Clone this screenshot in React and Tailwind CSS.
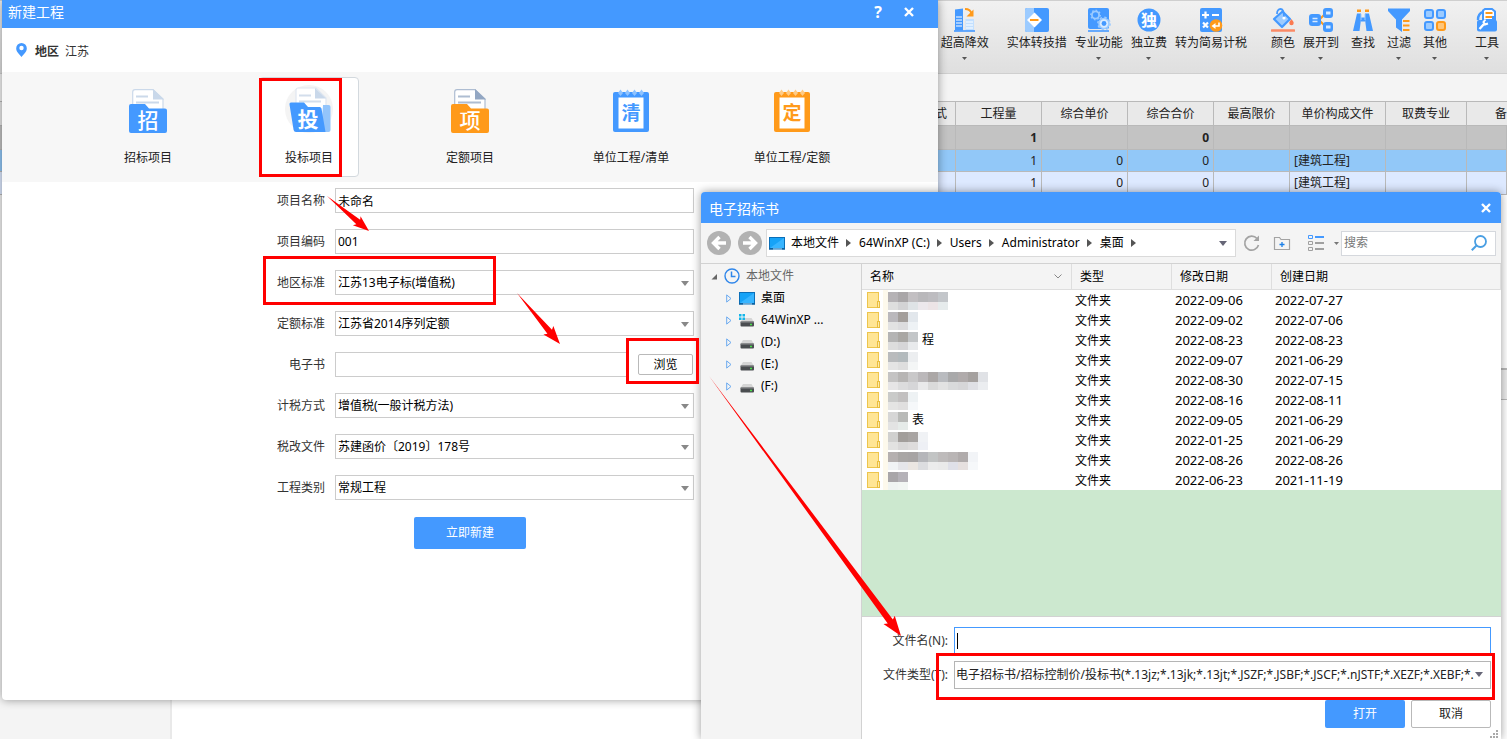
const BLUE = '#4499ff';
const LIGHT_BLUE = '#9ccbff';
const ORANGE = '#ff9a1a';

/* ---------- ribbon icons ---------- */

function RibbonIcon({ children }) {
  return (
    <svg width="24" height="24" viewBox="0 0 24 24" fill="none" aria-hidden="true">
      {children}
    </svg>
  );
}

const HighRiseIcon = () => (
  <RibbonIcon>
    <path d="M2 1.500L10 .5v22H2z" fill={BLUE} />
    <path d="M3 9h6M3 12h6M3 15h6M3 18h6" stroke="#fff" strokeWidth="1.2" />
    <path d="M12.500 11h8.500v12h-8.500z" fill="#c3e0ff" />
    <path d="M13 14h7M13 17h7M13 20h7" stroke="#fff" strokeWidth="1.2" />
    <path d="M12 1c4 0 6 2 6.500 5" stroke={ORANGE} strokeWidth="2" />
    <path d="M13.500 8.500h7V1.500z" fill={ORANGE} />
    <path d="M1 23h21" stroke={BLUE} strokeWidth="1.6" />
  </RibbonIcon>
);

const ConvertIcon = () => (
  <RibbonIcon>
    <rect width="24" height="24" rx="2" fill={BLUE} />
    <path d="M2 0h7v24H2a2 2 0 0 1-2-2V2a2 2 0 0 1 2-2z" fill={LIGHT_BLUE} />
    <path d="M9.500 4.500L17 12l-7.500 7.500L2 12z" fill="#fff" />
    <path d="M5 12h8.500" stroke={ORANGE} strokeWidth="2" />
  </RibbonIcon>
);

const GearsIcon = () => (
  <RibbonIcon>
    <rect x="1" width="21" height="21" rx="2" fill={BLUE} />
    <circle cx="8.500" cy="7" r="3.600" stroke={LIGHT_BLUE} strokeWidth="1.800" />
    <circle cx="8.500" cy="7" r="4.800" stroke={LIGHT_BLUE} strokeWidth="1.200" strokeDasharray="1.600 2.100" />
    <circle cx="17" cy="15.500" r="5" fill="#d9ebff" stroke={LIGHT_BLUE} strokeWidth="1.600" />
    <circle cx="17" cy="15.500" r="6.200" stroke={LIGHT_BLUE} strokeWidth="1.400" strokeDasharray="2.400 2.400" />
    <circle cx="17" cy="15.500" r="2.400" fill={BLUE} />
    <path d="M1 23h21" stroke={BLUE} strokeWidth="1.6" />
  </RibbonIcon>
);

const SoloFeeIcon = () => (
  <RibbonIcon>
    <circle cx="12" cy="12" r="11.500" fill={BLUE} />
    <text x="12" y="18" textAnchor="middle" fontSize="16" fontWeight="700" fill="#fff">独</text>
  </RibbonIcon>
);

const SimpleTaxIcon = () => (
  <RibbonIcon>
    <rect x="1" width="22" height="24" rx="2" fill={BLUE} />
    <path d="M3 7h7M6.500 3.500v7M13 7h7M4 14.500l5 5M9 14.500l-5 5" stroke="#fff" strokeWidth="2.200" />
    <circle cx="17" cy="17.500" r="6.300" fill={ORANGE} />
    <path d="M20 14.500v3.500h-4" stroke="#fff" strokeWidth="1.600" />
    <path d="M12.500 18l4-3v6z" fill="#fff" />
  </RibbonIcon>
);

const PaintIcon = () => (
  <RibbonIcon>
    <path d="M11.500 3.500l7.500 7.500-8 8-8-8z" fill={LIGHT_BLUE} stroke={BLUE} strokeWidth="2.200" strokeLinejoin="round" />
    <path d="M6 6c0-3.500 1.500-5 3.500-5S13 3 13 9" stroke={BLUE} strokeWidth="1.800" />
    <circle cx="13" cy="10" r="1.600" fill="#fff" />
    <path d="M20.500 11c1.200 1.800 2.200 2.800 2.200 4a2.200 2.200 0 0 1-4.400 0c0-1.200 1-2.200 2.200-4z" fill="#fb7a50" />
    <path d="M1 22.500h22" stroke="#fb8a66" strokeWidth="2.600" strokeLinecap="round" />
  </RibbonIcon>
);

const ExpandIcon = () => (
  <RibbonIcon>
    <path d="M10 12l7-7M10 12l7 7" stroke={ORANGE} strokeWidth="2" />
    <rect y="6" width="12" height="12" rx="3" fill={BLUE} />
    <path d="M3.500 10.500h5M3.500 13.500h5" stroke="#d7eaff" strokeWidth="1.600" />
    <rect x="14" width="10" height="10" rx="3" fill={BLUE} />
    <rect x="14" y="14" width="10" height="10" rx="3" fill={BLUE} />
    <path d="M17 5h4.500M17 19h4.500" stroke="#d7eaff" strokeWidth="2.800" />
  </RibbonIcon>
);

const BinocularsIcon = () => (
  <RibbonIcon>
    <path d="M6 1.500h4v2.500H6zM14 1.500h4v2.500h-4z" fill={ORANGE} />
    <path d="M6 5.500h4v6l-1.500 11.500H2zM18 5.500h-4v6l1.500 11.500H22z" fill={BLUE} />
    <path d="M10 9.500h4v4h-4z" fill={BLUE} />
    <path d="M10 6v6M14 6v6" stroke={LIGHT_BLUE} />
  </RibbonIcon>
);

const FilterIcon = () => (
  <RibbonIcon>
    <path d="M1 .5h22v2.500l-8 8.500V24l-6-4.500v-8L1 3z" fill={BLUE} />
    <path d="M16 13h6.500M16 17.500h6.500M16 22h6.500" stroke={ORANGE} strokeWidth="2.200" />
  </RibbonIcon>
);

const GridIcon = () => (
  <RibbonIcon>
    <rect x="2" y="2" width="8" height="8" rx="2" fill={LIGHT_BLUE} stroke={BLUE} strokeWidth="2" />
    <rect x="14" y="2" width="8" height="8" rx="2" fill={LIGHT_BLUE} stroke={BLUE} strokeWidth="2" />
    <rect x="2" y="14" width="8" height="8" rx="2" fill={LIGHT_BLUE} stroke={BLUE} strokeWidth="2" />
    <rect x="14" y="14" width="8" height="8" rx="2" fill="#ffc67a" stroke={ORANGE} strokeWidth="2" />
  </RibbonIcon>
);

const ToolsIcon = () => (
  <RibbonIcon>
    <path d="M8 12V2.500L10 1h7l3 2.500V12z" fill="#fff" stroke={BLUE} strokeWidth="2" />
    <path d="M10.500 5h7M10.500 9h7" stroke={ORANGE} strokeWidth="1.800" />
    <path d="M8 4C4.500 5 3 7.500 3 12" stroke={BLUE} strokeWidth="2.400" />
    <rect x="2" y="12" width="20" height="11.500" rx="2" fill={BLUE} />
    <path d="M17 8h4v6h-4z" fill={BLUE} />
    <path d="M4.500 21l4.500-5" stroke="#fff" strokeWidth="2.400" />
    <path d="M10.500 11.500l-2 2.500 1.500 2.500 3-1" stroke="#fff" strokeWidth="2" />
  </RibbonIcon>
);

const RIBBON_GROUPS = [
  {
    className: 'flex',
    items: [{ label: '超高降效', icon: HighRiseIcon, menu: true }],
  },
  {
    className: 'flex gap-2 ml-[18px]',
    items: [
      { label: '实体转技措', icon: ConvertIcon },
      { label: '专业功能', icon: GearsIcon, menu: true },
      { label: '独立费', icon: SoloFeeIcon, menu: true },
      { label: '转为简易计税', icon: SimpleTaxIcon },
    ],
  },
  {
    className: 'flex gap-2 ml-6',
    items: [
      { label: '颜色', icon: PaintIcon, menu: true },
      { label: '展开到', icon: ExpandIcon, menu: true },
    ],
  },
  {
    className: 'flex gap-3 ml-3',
    items: [
      { label: '查找', icon: BinocularsIcon },
      { label: '过滤', icon: FilterIcon, menu: true },
      { label: '其他', icon: GridIcon, menu: true },
    ],
  },
  {
    className: 'flex ml-7',
    items: [{ label: '工具', icon: ToolsIcon, menu: true }],
  },
];

function Triangle({ className = '' }) {
  return (
    <svg width="8" height="5" viewBox="0 0 8 5" className={className} aria-hidden="true">
      <path d="M0 0h8L4 5z" fill="currentColor" />
    </svg>
  );
}

function Ribbon() {
  return (
    <div className="flex h-[74px] shrink-0 justify-end border-y border-[#cfcfcf] bg-linear-to-b from-[#f1f1f1] to-[#dfdfdf] pr-2 pt-[7px]">
      {RIBBON_GROUPS.map((group) => (
        <div key={group.items[0].label} className={group.className}>
          {group.items.map(({ label, icon: Icon, menu }) => (
            <button key={label} type="button" className="flex flex-col items-center whitespace-nowrap text-[#222]">
              <Icon />
              <span className="mt-[3px] leading-4">{label}</span>
              {menu && (
                <svg width="5" height="3" viewBox="0 0 5 3" className="mt-1.5 text-[#555]" aria-hidden="true">
                  <path d="M0 0h5L2.500 3z" fill="currentColor" />
                </svg>
              )}
            </button>
          ))}
        </div>
      ))}
    </div>
  );
}

/* ---------- background sheet ---------- */

const SHEET_ROWS = [
  { className: 'h-6 bg-[#c3c3c3] font-bold', cells: ['', '1', '', '0', '', '', '', ''] },
  { className: 'h-[22px] bg-[#92c8f8]', cells: ['', '1', '0', '0', '', '[建筑工程]', '', ''] },
  { className: 'h-[23px] bg-[#dde9ff]', cells: ['', '1', '0', '0', '', '[建筑工程]', '', ''] },
];

function Sheet() {
  return (
    <table className="w-full shrink-0 table-fixed border-separate border-spacing-0 border-t border-[#b9b9b9] text-[#222]">
      <colgroup>
        <col />
        <col className="w-[86px]" />
        <col className="w-[86px]" />
        <col className="w-[86px]" />
        <col className="w-[76px]" />
        <col className="w-[96px]" />
        <col className="w-[81px]" />
        <col className="w-10" />
      </colgroup>
      <thead>
        <tr className="h-6 bg-[#e9e9e9]">
          {['式', '工程量', '综合单价', '综合合价', '最高限价', '单价构成文件', '取费专业', '备'].map((name, i) => (
            <th
              key={name}
              className={
                i === 0
                  ? 'border-b border-r border-[#b9b9b9] p-0 pr-2 text-right font-normal'
                  : i === 7
                    ? 'border-b border-[#b9b9b9] p-0 text-right font-normal'
                    : 'border-b border-r border-[#b9b9b9] p-0 text-center font-normal'
              }
            >
              {name}
            </th>
          ))}
        </tr>
      </thead>
      <tbody>
        {SHEET_ROWS.map((row, r) => (
          <tr key={r} className={row.className}>
            {row.cells.map((cell, i) => (
              <td
                key={i}
                className={
                  i === 5
                    ? 'border-b border-r border-[#b9b9b9] p-0 pl-1 leading-4'
                    : 'border-b border-r border-[#b9b9b9] p-0 pr-1 text-right leading-4'
                }
              >
                {cell}
              </td>
            ))}
          </tr>
        ))}
      </tbody>
    </table>
  );
}

function Workspace() {
  return (
    <div className="flex h-full flex-col bg-white">
      <Ribbon />
      <div className="h-[27px] shrink-0 bg-[#f4f4f4]" />
      <Sheet />
      <div className="flex flex-1">
        <div className="w-[172px] border-r-2 border-[#e9e9e9] bg-[#f4f4f4]" />
        <div className="flex flex-1 flex-col">
          <div className="h-[173px]" />
          <div className="h-8 border-b border-t-2 border-[#b9b9b9] bg-[#ececec]" />
        </div>
      </div>
    </div>
  );
}

/* ---------- new project window ---------- */

function FolderIcon({ char, color, line, fold }) {
  return (
    <svg width="40" height="44" viewBox="0 0 40 44" aria-hidden="true">
      <path d="M7 .7h18l10 9.300v14H4.700V3A2.300 2.300 0 0 1 7 .7z" fill="#fff" stroke={line} strokeWidth="1.200" />
      <path d="M25 0l11 10.500H25z" fill={fold} />
      <path d="M8 7.500h12M8 13.500h23" stroke={line} strokeWidth="2" />
      <path d="M3 15h14l4 4.500h16a2 2 0 0 1 2 2V42a2 2 0 0 1-2 2H3a2 2 0 0 1-2-2V17a2 2 0 0 1 2-2z" fill={color} />
      <text x="20" y="39" textAnchor="middle" fontSize="21" fontWeight="500" fill="#fff">{char}</text>
    </svg>
  );
}

function OpenFolderIcon({ char }) {
  return (
    <svg width="44" height="44" viewBox="0 0 44 44" className="overflow-visible" aria-hidden="true">
      <circle cx="22" cy="20" r="24" fill="#f4f4f4" />
      <path d="M11 -1h18l10 10v20H9V1a2 2 0 0 1 2-2z" fill="#fff" stroke="#dfe6f0" strokeWidth="1.200" />
      <path d="M28 -1l11 10.500H28z" fill="#c9d8ea" />
      <path d="M12 6.500h12M12 12.500h22" stroke="#d3deec" strokeWidth="2" />
      <path d="M36 16h5.500a2 2 0 0 1 2 2v23a2 2 0 0 1-2 2H34z" fill="#92c4fb" />
      <path d="M4 13.500h13l4 4.500h11.500a2 2 0 0 1 2 1.600L38.500 43H9a2.500 2.500 0 0 1-2.400-2L2.500 15.500A1.700 1.700 0 0 1 4 13.500z" fill={BLUE} />
      <text x="21" y="38" textAnchor="middle" fontSize="21" fontWeight="700" fill="#fff">{char}</text>
    </svg>
  );
}

function NotebookIcon({ char, color, light }) {
  return (
    <svg width="36" height="44" viewBox="0 0 36 44" aria-hidden="true">
      <rect y="3" width="36" height="40" rx="2" fill={color} />
      <path d="M5.500 8.500h25v31h-25z" fill="#fff" />
      {[7.5, 14.5, 21.5, 28.5].map((x) => (
        <path key={x} d={`M${x - 2.5} 4l2.500-3.500 2.500 3.500-2.500 3z`} fill={light} />
      ))}
      <text x="18" y="31" textAnchor="middle" fontSize="19" fontWeight="700" fill={color}>{char}</text>
    </svg>
  );
}

const PROJECT_TYPES = [
  { label: '招标项目', icon: <FolderIcon char="招" color={BLUE} line="#cbd9ea" fold="#c9d8ea" /> },
  { label: '投标项目', icon: <OpenFolderIcon char="投" />, active: true },
  { label: '定额项目', icon: <FolderIcon char="项" color={ORANGE} line="#aebdd2" fold="#93a7c3" /> },
  { label: '单位工程/清单', icon: <NotebookIcon char="清" color={BLUE} light="#8fc3ff" /> },
  { label: '单位工程/定额', icon: <NotebookIcon char="定" color={ORANGE} light="#ffcb85" /> },
];

const FIELDS = [
  { id: 'name', label: '项目名称', type: 'text', value: '未命名' },
  { id: 'code', label: '项目编码', type: 'text', value: '001' },
  { id: 'region', label: '地区标准', type: 'select', value: '江苏13电子标(增值税)' },
  { id: 'quota', label: '定额标准', type: 'select', value: '江苏省2014序列定额' },
  { id: 'ebook', label: '电子书', type: 'file', value: '' },
  { id: 'tax', label: '计税方式', type: 'select', value: '增值税(一般计税方法)' },
  { id: 'taxdoc', label: '税改文件', type: 'select', value: '苏建函价〔2019〕178号' },
  { id: 'category', label: '工程类别', type: 'select', value: '常规工程' },
];

function CloseIcon() {
  return (
    <svg width="10" height="10" viewBox="0 0 10 10" aria-hidden="true">
      <path d="M1 1l8 8M9 1L1 9" stroke="#fff" strokeWidth="2.400" />
    </svg>
  );
}

function Field({ id, label, type, value }) {
  return (
    <div className="flex items-center">
      <label htmlFor={id} className="w-[89px] shrink-0 pr-2.5 text-right text-[#333]">
        {label}
      </label>
      {type === 'select' ? (
        <div className="relative flex-1">
          <select id={id} className="block h-[25px] w-full appearance-none border border-[#ccc] bg-white pl-0.5 text-black">
            <option>{value}</option>
          </select>
          <Triangle className="pointer-events-none absolute right-[5px] top-[11px] text-[#888]" />
        </div>
      ) : (
        <div className="flex h-[25px] flex-1 items-center">
          <input
            id={id}
            type="text"
            defaultValue={value}
            className="block h-[25px] w-full min-w-0 flex-1 border border-[#ccc] bg-white pl-0.5 text-black"
          />
          {type === 'file' && (
            <button type="button" className="ml-2.5 mr-px h-[21px] w-[55px] rounded-xs border border-[#b9b9b9] bg-white leading-4 text-black">
              浏览
            </button>
          )}
        </div>
      )}
    </div>
  );
}

function NewProjectWindow() {
  return (
    <section className="absolute bottom-[39px] left-0.5 right-[569px] top-0 flex flex-col overflow-hidden rounded-b bg-white shadow-[0_0_10px_rgba(0,0,0,0.4)]">
      <header className="flex h-7 shrink-0 items-center bg-[#4499ff] pb-1 pl-1.5 pr-6 text-white">
        <h1 className="flex-1 text-sm leading-5">新建工程</h1>
        <button type="button" aria-label="帮助" className="mr-[22px] text-base font-bold leading-5">?</button>
        <button type="button" aria-label="关闭">
          <CloseIcon />
        </button>
      </header>
      <div className="flex h-11 shrink-0 items-center gap-2 pl-3.5 pt-1 text-[#333]">
        <svg width="11" height="14" viewBox="0 0 11 14" className="mb-1" aria-hidden="true">
          <path d="M5.500 0a5.300 5.300 0 0 1 5.300 5.400C10.800 9 7.500 11 5.500 14 3.500 11 .2 9 .2 5.400A5.300 5.300 0 0 1 5.500 0z" fill={BLUE} />
          <circle cx="5.500" cy="5" r="2.200" fill="#fff" />
        </svg>
        <span className="font-bold">地区</span>
        <span className="-ml-0.5">江苏</span>
      </div>
      <nav className="flex h-[110px] shrink-0 items-center justify-center gap-[61px] bg-[#f7f7f7]">
        {PROJECT_TYPES.map(({ label, icon, active }) => (
          <button
            key={label}
            type="button"
            className={
              active
                ? 'flex h-[100px] w-[100px] flex-col items-center rounded-sm border border-[#d3d9de] bg-white pt-[11px] text-[#222]'
                : 'flex h-[100px] w-[100px] flex-col items-center border border-transparent pt-[11px] text-[#222]'
            }
          >
            {icon}
            <span className="mt-[17px] leading-4">{label}</span>
          </button>
        ))}
      </nav>
      <form className="mx-auto w-full max-w-[448px] pt-1.5" onSubmit={(e) => e.preventDefault()}>
        <div className="flex flex-col gap-4">
          {FIELDS.map((field) => (
            <Field key={field.id} {...field} />
          ))}
        </div>
        <button type="submit" className="mx-auto mt-[17px] block h-8 w-28 rounded-xs bg-[#4499ff] text-white">
          立即新建
        </button>
      </form>
    </section>
  );
}

/* ---------- file dialog ---------- */

function MonitorIcon() {
  return (
    <svg width="16" height="13" viewBox="0 0 16 13" className="shrink-0" aria-hidden="true">
      <rect x=".5" y=".5" width="15" height="11" fill="#16a3f7" stroke="#0b6fb8" />
      <path d="M1 11L15 1v10z" fill="#38b5ff" />
      <path d="M0 12h16" stroke="#0b5f9e" strokeWidth="1.500" />
      <path d="M4 12h9" stroke="#bfe6ff" strokeWidth="1" />
    </svg>
  );
}

function DriveIcon({ system }) {
  return (
    <svg width="16" height="14" viewBox="0 0 16 14" className="shrink-0" aria-hidden="true">
      <path d="M4 5h8.500L15 9H1.500z" fill="#d5d5d5" />
      <rect x="1.500" y="8.500" width="13.500" height="5" rx="1" fill="#4a4d50" />
      <path d="M1.500 9h13.500" stroke="#8b8d8f" />
      <path d="M11 11.500h2" stroke="#4be04b" strokeWidth="1.400" />
      {system && <path d="M0 1h2.500v2.500H0zM3.500 1H6v2.500H3.500zM0 4.500h2.500V7H0zM3.500 4.500H6V7H3.500z" fill="#13b5ea" />}
    </svg>
  );
}

function FolderSmall() {
  return (
    <svg width="14" height="16" viewBox="0 0 14 16" className="shrink-0" aria-hidden="true">
      <rect x=".5" y=".5" width="11" height="15" fill="#ffe595" stroke="#edc54d" />
      <rect x="10.500" y="9.500" width="2" height="6" fill="#ffe9a8" stroke="#e8bd3e" />
    </svg>
  );
}

function NavArrow({ label, d }) {
  return (
    <button type="button" aria-label={label}>
      <svg width="24" height="24" viewBox="0 0 24 24" aria-hidden="true">
        <circle cx="12" cy="12" r="12" fill="#b2b2b2" />
        <path d={d} fill="none" stroke="#fff" strokeWidth="3.400" />
      </svg>
    </button>
  );
}

const CRUMBS = ['本地文件', '64WinXP (C:)', 'Users', 'Administrator', '桌面'];

function DialogToolbar() {
  return (
    <div className="flex h-[41px] shrink-0 items-center border-b border-[#d2d2d2] pl-1.5 pr-[5px]">
      <NavArrow label="后退" d="M19 12H7M12.500 6L6.500 12l6 6" />
      <span className="w-[7px]" />
      <NavArrow label="前进" d="M5 12h12M11.500 6l6 6-6 6" />
      <div className="ml-1 flex h-7 flex-1 items-center border border-[#dadada] bg-white pl-0.5 pr-2">
        <MonitorIcon />
        <ol className="ml-1.5 flex flex-1 items-center whitespace-nowrap text-black">
          {CRUMBS.map((crumb) => (
            <li key={crumb} className="flex items-center">
              <a href="#">{crumb}</a>
              <svg width="5" height="8" viewBox="0 0 5 8" className="ml-[7px] mr-2 text-[#555]" aria-hidden="true">
                <path d="M0 0l5 4-5 4z" fill="currentColor" />
              </svg>
            </li>
          ))}
        </ol>
        <Triangle className="text-[#667]" />
      </div>
      <button type="button" aria-label="刷新" className="ml-[7px]">
        <svg width="18" height="18" viewBox="0 0 18 18" fill="none" aria-hidden="true">
          <path d="M15.500 11A7 7 0 1 1 14 4.500" stroke="#a3a3a3" strokeWidth="1.700" />
          <path d="M16 1.500V7h-5.500z" fill="#a3a3a3" />
        </svg>
      </button>
      <button type="button" aria-label="新建文件夹" className="ml-3">
        <svg width="18" height="16" viewBox="0 0 18 16" fill="none" aria-hidden="true">
          <path d="M1.500 2.500h5l1.500 2h8.500v10h-15z" stroke="#a3a3a3" strokeWidth="1.200" />
          <path d="M6.500 9.500h5M9 7v5" stroke="#1a7fe8" strokeWidth="1.300" />
        </svg>
      </button>
      <button type="button" aria-label="视图" className="ml-[17px] flex items-center gap-2.5">
        <svg width="16" height="16" viewBox="0 0 16 16" fill="none" aria-hidden="true">
          <path d="M.5.500h4v3h-4z" stroke={BLUE} />
          <path d="M7 2h9" stroke={BLUE} strokeWidth="2" />
          <path d="M.5 6.500h4v3h-4zM.5 12.500h4v3h-4z" stroke="#a0a0a0" />
          <path d="M7 8h9M7 14h9" stroke="#a0a0a0" strokeWidth="2" />
        </svg>
        <svg width="5" height="3" viewBox="0 0 5 3" aria-hidden="true">
          <path d="M0 0h5L2.500 3z" fill="#777" />
        </svg>
      </button>
      <div className="ml-0.5 flex h-[25px] w-[155px] items-center border border-[#d5d8dd] bg-white pl-0.5 pr-2">
        <input type="search" aria-label="搜索" placeholder="搜索" className="min-w-0 flex-1 placeholder:text-[#777]" />
        <svg width="16" height="16" viewBox="0 0 16 16" fill="none" aria-hidden="true">
          <circle cx="9.500" cy="6.500" r="5.500" stroke="#4a9fe3" strokeWidth="1.800" />
          <path d="M5.500 10.500L.8 15.200" stroke="#4a9fe3" strokeWidth="2" />
        </svg>
      </div>
    </div>
  );
}

const PLACES = [
  { name: '桌面', icon: <MonitorIcon /> },
  { name: '64WinXP ...', icon: <DriveIcon system /> },
  { name: '(D:)', icon: <DriveIcon /> },
  { name: '(E:)', icon: <DriveIcon /> },
  { name: '(F:)', icon: <DriveIcon /> },
];

function PlacesTree() {
  return (
    <aside className="w-[161px] shrink-0 border-r border-[#d2d2d2] pt-px">
      <div className="flex h-[22px] items-center pl-2.5 text-[#666]">
        <svg width="7" height="7" viewBox="0 0 7 7" aria-hidden="true">
          <path d="M6 1v5.500H.5z" fill="#666" />
        </svg>
        <svg width="16" height="16" viewBox="0 0 16 16" fill="none" className="ml-1.5" aria-hidden="true">
          <circle cx="8" cy="8" r="7" stroke="#2f86ea" strokeWidth="1.400" />
          <path d="M7.500 3.500v5h4" stroke="#2f86ea" strokeWidth="1.500" />
        </svg>
        <span className="ml-1.5">本地文件</span>
      </div>
      <ul>
        {PLACES.map(({ name, icon }) => (
          <li key={name} className="flex h-[22px] items-center pl-[25px] text-black">
            <svg width="6" height="9" viewBox="0 0 6 9" fill="none" className="mr-[7px]" aria-hidden="true">
              <path d="M.7.900L5 4.500.7 8.100z" stroke="#6aa9ef" />
            </svg>
            {icon}
            <span className="ml-1.5 leading-4">{name}</span>
          </li>
        ))}
      </ul>
    </aside>
  );
}

// Names are shown pixelated: two strips of 10px blocks per row, with any readable tail after them.
const FILES = [
  {
    top: ['#b5b2b5', '#a9a6a8', '#c2bfc2', '#b9b8bb', '#bdbcc0', '#c3c6ca'],
    bottom: ['#dedede', '#d3d3d5', '#dfe3e6', '#ece8ec', '#ece4e6', '#e6ebec'],
    modified: '2022-09-06',
    created: '2022-07-27',
  },
  {
    top: ['#bab8bc', '#a39e9b', '#e2e7ec'],
    bottom: ['#e2e2e2', '#dcdcde', '#eef2f5'],
    modified: '2022-09-02',
    created: '2022-07-06',
  },
  {
    top: ['#b4b4b4', '#a9a7a4', '#c3c6c8'],
    bottom: ['#dddddd', '#d6d6d8', '#e8eaec'],
    tail: '程',
    modified: '2022-08-23',
    created: '2022-08-23',
  },
  {
    top: ['#b9bbbd', '#b3babd', '#eceef0'],
    bottom: ['#e4e4e4', '#dedede', '#f4f6f6'],
    modified: '2022-09-07',
    created: '2021-06-29',
  },
  {
    top: ['#c4c3c3', '#b7b5b4', '#c9c8c9', '#bbb8ba', '#aba7a6', '#b9bbbf', '#a9a9aa', '#b0abab', '#a5a19f', '#e0e2e6'],
    bottom: ['#e6e5e6', '#dcdcdd', '#d6d6d8', '#e9e9ea', '#dadada', '#e2e2e2', '#d9dadb', '#d6d6d8', '#dfe0e5', '#ebedf0'],
    modified: '2022-08-30',
    created: '2022-07-15',
  },
  {
    top: ['#c9cac9', '#c2c0c0', '#eef2f4'],
    bottom: ['#e4e4e3', '#e0dfdf', '#f6f8fa'],
    modified: '2022-08-16',
    created: '2022-08-11',
  },
  {
    top: ['#d6d6d6', '#b9bab8'],
    bottom: ['#e3e3e3', '#e6ebe9'],
    tail: '表',
    modified: '2022-09-05',
    created: '2021-06-29',
  },
  {
    top: ['#d0d0cf', '#a29e9b', '#a8a4a2', '#f0f2f5'],
    bottom: ['#e2e2e1', '#d9d8d8', '#dedcdc', '#eef0f5'],
    modified: '2022-01-25',
    created: '2021-06-29',
  },
  {
    top: ['#b5b0b0', '#a9a6a5', '#a7a4a4', '#b5b6ba', '#c2c4c4', '#bebbbb', '#b9b5b5', '#b0abab', '#f2f4f7'],
    bottom: ['#f1f3f5', '#e6e6ea', '#ebe6e2', '#dcdde0', '#ececec', '#eaeaea', '#dfe0e8', '#e6e0df', '#f6f8fa'],
    modified: '2022-08-26',
    created: '2022-08-26',
  },
  {
    top: ['#a9a6a9', '#b5b2b8'],
    bottom: ['#f0f4f2', '#f2f6f3'],
    modified: '2022-06-23',
    created: '2021-11-19',
  },
];

function PixelatedName({ top, bottom, tail }) {
  return (
    <>
      <svg
        width={top.length * 10}
        height="20"
        viewBox={`0 0 ${top.length * 10} 20`}
        className="ml-[7px] shrink-0 overflow-visible"
        shapeRendering="crispEdges"
        aria-hidden="true"
      >
        <rect x="-5" y="0" width="5" height="20" fill="#fdf9ec" />
        {top.map((color, i) => (
          <rect key={i} x={i * 10} y="2" width="10" height="10" fill={color} />
        ))}
        {bottom.map((color, i) => (
          <rect key={i} x={i * 10} y="12" width="10" height="8" fill={color} />
        ))}
      </svg>
      {tail && <span className="ml-1">{tail}</span>}
    </>
  );
}

function FileList() {
  return (
    <table className="w-full table-fixed border-separate border-spacing-0 bg-white text-black">
      <colgroup>
        <col className="w-[210px]" />
        <col className="w-[100px]" />
        <col className="w-[100px]" />
        <col />
      </colgroup>
      <thead>
        <tr className="h-[26px] bg-[#f4f4f4] text-left">
          <th className="border-b border-r border-[#dedede] p-0 px-2 font-normal">
            <div className="flex items-center justify-between">
              名称
              <svg width="8" height="5" viewBox="0 0 8 5" fill="none" className="mr-px" aria-hidden="true">
                <path d="M.5.500L4 4 7.500.500" stroke="#888" />
              </svg>
            </div>
          </th>
          <th className="border-b border-r border-[#dedede] p-0 pl-2 font-normal">类型</th>
          <th className="border-b border-r border-[#dedede] p-0 pl-2 font-normal">修改日期</th>
          <th className="border-b border-r border-[#dedede] p-0 pl-2 font-normal">创建日期</th>
        </tr>
      </thead>
      <tbody>
        {FILES.map((file, i) => (
          <tr key={i} className="h-5">
            <td className="p-0">
              <div className="flex h-5 items-center pl-[5px]">
                <FolderSmall />
                <PixelatedName top={file.top} bottom={file.bottom} tail={file.tail} />
              </div>
            </td>
            <td className="p-0 pl-[3px] pt-0.5 leading-[18px]">文件夹</td>
            <td className="p-0 pl-[3px] text-[13px] leading-5">{file.modified}</td>
            <td className="p-0 pl-[3px] text-[13px] leading-5">{file.created}</td>
          </tr>
        ))}
      </tbody>
    </table>
  );
}

function DialogFooter() {
  return (
    <form
      className="relative shrink-0 border-t border-[#d2d2d2] bg-white pb-[11px] pr-2.5 pt-2.5 text-[#333]"
      onSubmit={(e) => e.preventDefault()}
    >
      <div className="flex items-center">
        <label htmlFor="filename" className="w-[92px] shrink-0 pr-1.5 text-right">文件名(N):</label>
        <div className="relative flex-1">
          <input id="filename" type="text" className="block h-7 w-full border border-[#4499ff] bg-white pl-0.5" />
          <span className="absolute left-[3px] top-1.5 h-4 w-px bg-black" />
        </div>
      </div>
      <div className="mt-1.5 flex items-center">
        <label htmlFor="filetype" className="w-[92px] shrink-0 whitespace-nowrap pr-1.5 text-right">文件类型(T):</label>
        <div className="relative min-w-0 flex-1">
          <select id="filetype" className="block h-7 w-full appearance-none border border-[#b5b5b5] bg-white pl-px pr-4 text-[#222]">
            <option>电子招标书/招标控制价/投标书(*.13jz;*.13jk;*.13jt;*.JSZF;*.JSBF;*.JSCF;*.nJSTF;*.XEZF;*.XEBF;*.</option>
          </select>
          <Triangle className="pointer-events-none absolute right-2 top-[11px] text-[#667]" />
        </div>
      </div>
      <div className="mt-[11px] flex justify-end gap-1.5">
        <button type="submit" className="h-7 w-20 rounded-xs bg-[#4499ff] text-white">打开</button>
        <button type="button" className="h-7 w-20 rounded-xs border border-[#b9b9b9] bg-white text-[#222]">取消</button>
      </div>
      <svg width="9" height="8" viewBox="0 0 9 8" className="absolute bottom-px right-0.5" aria-hidden="true">
        <path d="M6 0h2v2H6zM3 3h2v2H3zM6 3h2v2H6zM0 6h2v2H0zM3 6h2v2H3zM6 6h2v2H6z" fill="#aaa" />
      </svg>
    </form>
  );
}

function FileDialog() {
  return (
    <section className="absolute bottom-0 left-[701px] right-1.5 top-48 flex flex-col overflow-hidden rounded-t bg-[#f4f4f4] shadow-[0_0_10px_rgba(0,0,0,0.4)]">
      <header className="flex h-[31px] shrink-0 items-center bg-[#4499ff] pl-2 pr-2.5 text-white">
        <h2 className="flex-1 pt-0.5 text-sm leading-5">电子招标书</h2>
        <button type="button" aria-label="关闭">
          <CloseIcon />
        </button>
      </header>
      <DialogToolbar />
      <div className="flex min-h-0 flex-1">
        <PlacesTree />
        <div className="flex min-w-0 flex-1 flex-col">
          <FileList />
          <div className="flex-1 bg-[#cce8cf]" />
          <DialogFooter />
        </div>
      </div>
    </section>
  );
}

/* ---------- step annotations ---------- */

const ARROWS = [
  { from: [327, 196], to: [369, 231], head: 16, wing: 6, shaft: 3 },
  { from: [517, 293], to: [560, 344], head: 18, wing: 6.5, shaft: 3 },
  { from: [709, 376], to: [901, 636], head: 20, wing: 7, shaft: 3.2 },
];

function arrowPoints({ from, to, head, wing, shaft }) {
  const dx = to[0] - from[0];
  const dy = to[1] - from[1];
  const len = Math.hypot(dx, dy);
  const at = (along, side) => [
    from[0] + (dx * along - dy * side) / len,
    from[1] + (dy * along + dx * side) / len,
  ].join(',');
  return [
    at(0, 0),
    at(len - head + 2, shaft),
    at(len - head, wing),
    at(len, 0),
    at(len - head, -wing),
    at(len - head + 2, -shaft),
  ].join(' ');
}

function Annotations() {
  return (
    <div className="pointer-events-none absolute inset-0" aria-hidden="true">
      <div className="absolute left-[259px] top-[78px] h-[99px] w-[83px] border-3 border-[#ff0000]" />
      <div className="absolute left-[263px] top-64 h-[49px] w-[233px] border-3 border-[#ff0000]" />
      <div className="absolute left-[626px] top-[338px] h-[46px] w-[73px] border-3 border-[#ff0000]" />
      <div className="absolute left-[936px] top-[653px] h-[47px] w-[559px] border-3 border-[#ff0000]" />
      <svg className="absolute inset-0 h-full w-full">
        {ARROWS.map((arrow) => (
          <polygon key={arrow.from[0]} points={arrowPoints(arrow)} fill="#ff0000" />
        ))}
      </svg>
    </div>
  );
}

export default function App() {
  return (
    <main className="relative h-screen overflow-hidden font-['Noto_Sans','Noto_Sans_CJK_SC',sans-serif] text-xs">
      <Workspace />
      <NewProjectWindow />
      <FileDialog />
      <Annotations />
    </main>
  );
}
